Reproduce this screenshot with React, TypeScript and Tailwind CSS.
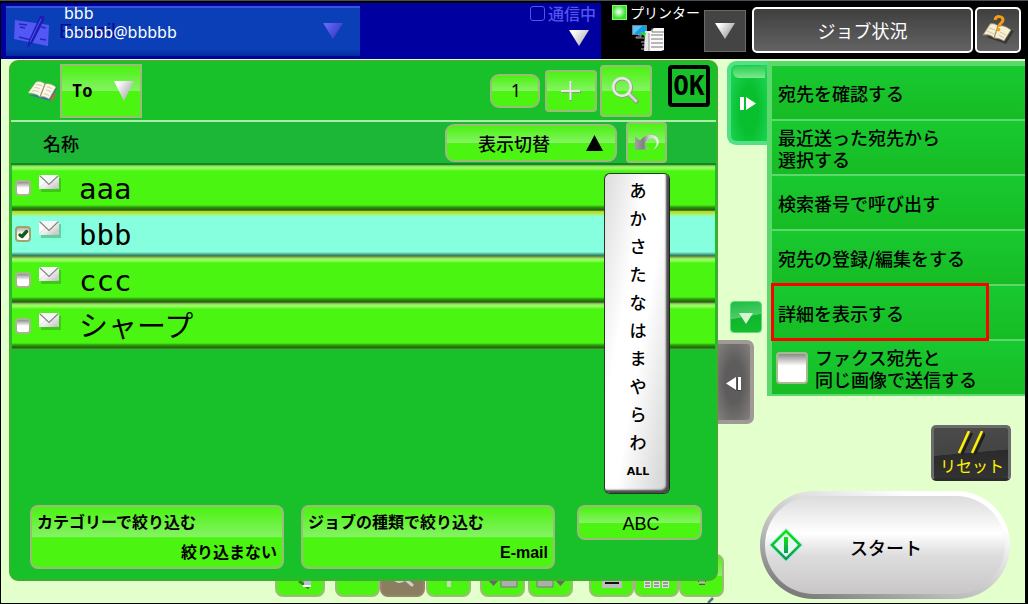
import React, { useState } from "react";
import clsx from "clsx";

const JP = "font-['Noto_Sans_CJK_JP',sans-serif]";

const GLOSS =
  "border-2 border-[#9dbb78] bg-[linear-gradient(180deg,#4bf212_0%,#85f364_50%,#4cf511_51%,#4cf511_100%)] text-black";

const contacts = ["aaa", "bbb", "ccc", "シャープ"];
const kana = ["あ", "か", "さ", "た", "な", "は", "ま", "や", "ら", "わ"];
const actions: string[][] = [
  ["宛先を確認する"],
  ["最近送った宛先から", "選択する"],
  ["検索番号で呼び出す"],
  ["宛先の登録/編集をする"],
  ["詳細を表示する"],
];

function Triangle({ className, from = "#ffffff", to = "#b4b4b4", id }: { className?: string; from?: string; to?: string; id: string }) {
  return (
    <svg viewBox="0 0 20 16" preserveAspectRatio="none" className={className} aria-hidden="true">
      <defs>
        <linearGradient id={id} x1="0" y1="0" x2="1" y2="0.6">
          <stop offset="0.2" stopColor={from} />
          <stop offset="1" stopColor={to} />
        </linearGradient>
      </defs>
      <path d="M0 0h20L10 16z" fill={`url(#${id})`} />
    </svg>
  );
}

function MailPenIcon() {
  return (
    <svg viewBox="0 0 38 34" className="h-[34px] w-[38px]" aria-hidden="true">
      <path d="M2 5l34 5-1 21L1 24z" fill="#5358f5" />
      <path d="M6 9l8 1M7 12l5 1M28 12l5 1M6 22l12 3M27 24l6 1" stroke="#2727b8" strokeWidth="1.3" />
      <path d="M27 1c4-1 5 1 4 4L20 27l-6 6 2-8z" fill="#1b1bb6" />
      <path d="M28 4L17 27" stroke="#4a4fe0" strokeWidth="1.2" />
    </svg>
  );
}

function BookIcon({ className }: { className?: string }) {
  return (
    <svg viewBox="0 0 30 20" className={className} aria-hidden="true">
      <path d="M1 14l21 6 7-13-1-2-6 9z" fill="#39759b" />
      <path d="M22 19l4-7 2 1-4 7z" fill="#c8623c" />
      <path d="M0 12L8 1c4-1 7 0 9 2 3-1 7 0 11 3l-7 12c-3-2-6-3-9-2-3-3-7-4-12-4z" fill="#fbf7e6" stroke="#a9a184" strokeWidth="0.6" />
      <path d="M17 3l-5 13" stroke="#a08f66" strokeWidth="1.2" />
      <path d="M8 4c2-1 4 0 6 1M6 7c2-1 4 0 6 1M4 10c3-1 5 0 7 1M19 6c2 0 4 1 5 2M18 9c2 0 4 1 5 2M16 13c2 0 4 1 5 2" stroke="#c9c1a2" strokeWidth="0.9" fill="none" />
    </svg>
  );
}

function HelpBookIcon() {
  return (
    <svg viewBox="0 0 32 30" className="h-[30px] w-[32px]" aria-hidden="true">
      <path d="M4 22l20 7 8-13-3-1z" fill="#2e2a25" opacity="0.7" />
      <path d="M1 20L8 9c3-1 6 0 8 2 4-1 8 0 13 4l-7 11c-3-2-7-3-10-3-3-3-6-4-11-3z" fill="#f6efd4" stroke="#97876a" strokeWidth="0.8" />
      <path d="M16 11l-4 12" stroke="#a08f66" strokeWidth="1.2" />
      <path d="M7 13l6 2M5 16l7 3M18 17l6 3M17 20l5 3" stroke="#cbbf9b" strokeWidth="0.9" />
      <path d="M13 5c1-5 8-4 8 0 0 3-4 3-4 7" stroke="#f59c12" strokeWidth="3" fill="none" strokeLinecap="butt" />
      <circle cx="16.500" cy="14.600" r="1.800" fill="#f59c12" />
    </svg>
  );
}

function PrinterIcon() {
  return (
    <svg viewBox="0 0 33 27" className="h-[27px] w-[33px]" aria-hidden="true">
      <rect x="0.5" y="0.5" width="14" height="9" fill="#159de4" stroke="#6d7f8c" />
      <path d="M1 1h9L2 9H1z" fill="#5cc3f5" />
      <path d="M6 10h3v2H4v1h8" stroke="#9aa4aa" fill="none" />
      <path d="M9 17h4M10 20h3M9 24h4" stroke="#777" strokeWidth="1.600" />
      <path d="M13 6h5v20h-6z" fill="#e8e8e8" />
      <path d="M17 7l5-4h10v22l-3 1H17z" fill="#fafafa" />
      <path d="M20 3v4h12M19 10h12M19 14h12M19 18h12M19 22h12" stroke="#777" strokeWidth="1" fill="none" />
      <path d="M17 8v18" stroke="#999" />
      <path d="M8 7l6 1-1 4z" fill="#27e021" />
    </svg>
  );
}

function EnvelopeIcon() {
  return (
    <svg viewBox="0 0 24 19" className="mt-[10px] h-[19px] w-[24px] self-start" aria-hidden="true">
      <defs>
        <linearGradient id="env" x1="0" y1="0" x2="1" y2="1">
          <stop offset="0.4" stopColor="#fff" />
          <stop offset="1" stopColor="#b9b9b9" />
        </linearGradient>
      </defs>
      <rect x="2" y="3" width="20" height="14" fill="#1c7a20" opacity="0.35" />
      <rect width="20" height="14" fill="url(#env)" />
      <path d="M0 13l7-6M20 13l-7-6" stroke="#dadada" />
      <path d="M0.5 0.5l9.5 9 9.5-9" stroke="#858585" strokeWidth="1.2" fill="#f6f6f6" />
    </svg>
  );
}

const TickBox = ({ id, checked, onChange, label }: { id: string; checked: boolean; onChange: () => void; label: string }) => (
  <span className="relative flex size-[16px]">
    <input
      id={id}
      type="checkbox"
      aria-label={label}
      checked={checked}
      onChange={onChange}
      className="size-[16px] appearance-none rounded-[4px] border-2 border-[#a5b889] bg-[linear-gradient(180deg,#8f8f8f,#ffffff_50%)] checked:border-[#a2a26c] checked:bg-[linear-gradient(180deg,#b5b5b5,#ffffff_50%)]"
    />
    {checked && (
      <svg viewBox="0 0 16 16" className="pointer-events-none absolute inset-0" aria-hidden="true">
        <path d="M5 9l2 1.500 4.500-5" stroke="#155c12" strokeWidth="3.400" strokeLinecap="round" strokeLinejoin="round" fill="none" />
      </svg>
    )}
  </span>
);

function Header() {
  return (
    <header className="flex h-[59px] shrink-0 border-t border-[#4b4f5c] bg-black pt-[2px] pl-px">
      <div className="flex min-w-0 flex-1 bg-[#0000a0]">
        <button className="relative mt-[3px] ml-[5px] flex h-[50px] w-[59%] items-center border-t-2 border-[#3457d8] bg-[linear-gradient(180deg,#0a3fb8,#0a3fb8_85%,#062c9c)] pr-[17px] pl-[7px] text-left">
          <MailPenIcon />
          <span className="absolute top-[11px] left-[53px] font-['Liberation_Sans',sans-serif] text-[20px] leading-[24px] text-[#0a0a90]" aria-hidden="true">
            E-mail
          </span>
          <span className="relative ml-[13px] flex flex-1 flex-col self-start font-['Noto_Sans',sans-serif] text-[16px] leading-[19px] text-white">
            <span className="-mt-[4px]">bbb</span>
            <span>bbbbb@bbbbb</span>
          </span>
          <Triangle id="tri-mail" from="#6266f5" to="#3436c4" className="-mt-[2px] h-[16px] w-[20px]" />
        </button>
        <div className="ml-auto flex flex-col items-end pr-[5px]">
          <div className="flex items-center gap-[3px] text-[16px] leading-[20px] font-medium text-[#5353f0]">
            <span className="size-[15px] rounded-[3px] border border-[#5353f0]" />
            通信中
          </div>
          <button aria-label="通信メニュー" className="mt-[7px] mr-[7px]">
            <Triangle id="tri-comm" className="h-[16px] w-[20px]" />
          </button>
        </div>
      </div>
      <div className="flex w-[103px] flex-col pl-[11px] text-white">
        <div className="flex items-center gap-[3px] text-[14px] leading-[18px] whitespace-nowrap">
          <span className="size-[15px] shrink-0 border border-[#8af56d] bg-[radial-gradient(circle_at_45%_45%,#ffffff,#35e52c_65%)]" />
          プリンター
        </div>
        <div className="mt-[4px] pl-[20px]">
          <PrinterIcon />
        </div>
      </div>
      <button aria-label="プリンターメニュー" className="mt-[7px] flex size-[42px] items-center justify-center border border-[#6a6a6a] bg-[#444444]">
        <Triangle id="tri-print" className="h-[16px] w-[20px]" to="#999999" />
      </button>
      <button className="mt-[4px] ml-[6px] h-[46px] w-[221px] rounded-[5px] border-2 border-white bg-[linear-gradient(180deg,#3f3f3f,#636363)] text-[18px] leading-[22px] text-white">
        ジョブ状況
      </button>
      <button aria-label="ヘルプ" className="mt-[4px] mr-[7px] ml-[2px] flex size-[46px] items-center justify-center rounded-[5px] border-2 border-white bg-[linear-gradient(180deg,#3f3f3f,#636363)]">
        <HelpBookIcon />
      </button>
    </header>
  );
}

function AddressPanel() {
  const [picked, setPicked] = useState("bbb");
  return (
    <section className="relative z-10 mt-px mb-[22px] ml-[8px] flex min-w-0 flex-1 flex-col rounded-[9px] border-2 border-[#3fae2c] bg-[#18c129]">
      <div className="flex h-[58px] items-center pr-[6px] pl-[17px]">
        <BookIcon className="h-[20px] w-[30px]" />
        <button className={clsx("ml-[2px] flex h-[54px] w-[82px] items-center justify-between pr-[6px] pl-[10px] font-['DejaVu_Sans_Mono',monospace] text-[17px] leading-[20px] font-bold", GLOSS)}>
          To
          <Triangle id="tri-to" className="h-[20px] w-[20px]" to="#a8a8a8" />
        </button>
        <button className={clsx("ml-auto h-[34px] w-[50px] rounded-[9px] pb-[2px] pl-[2px] font-['Noto_Sans',sans-serif] text-[18px] leading-[22px]", GLOSS)}>1</button>
        <button aria-label="追加" className={clsx("ml-[5px] flex h-[42px] w-[52px] items-center justify-center rounded-[4px]", GLOSS)}>
          <svg viewBox="0 0 20 20" className="size-[20px]" aria-hidden="true">
            <path d="M10 1v19M1 11h19" stroke="#8d968a" strokeWidth="2" />
            <path d="M9.500 0v19M0 10h19" stroke="#e4ece0" strokeWidth="2" />
          </svg>
        </button>
        <button aria-label="検索" className={clsx("ml-[3px] flex size-[52px] items-center justify-center rounded-[4px] pb-[3px] pr-[2px]", GLOSS)}>
          <svg viewBox="0 0 28 28" className="size-[28px]" aria-hidden="true">
            <path d="M18.500 18.500l7 7" stroke="#8d8d8d" strokeWidth="4.500" strokeLinecap="round" />
            <circle cx="11.500" cy="11.500" r="8.800" fill="none" stroke="#929c8a" strokeWidth="3.600" />
            <path d="M18 18l7 7" stroke="#d6d6d6" strokeWidth="3" strokeLinecap="round" />
            <circle cx="11" cy="11" r="8.800" fill="none" stroke="#e6e8e2" strokeWidth="2.800" />
          </svg>
        </button>
        <button className="mt-[3px] ml-[16px] size-[42px] self-start rounded-[4px] border-4 border-black text-center font-['DejaVu_Sans_Mono',monospace] text-[26px] leading-[34px] font-bold text-black">
          OK
        </button>
      </div>

      <div className="flex h-[45px] items-center border-t-2 border-b-2 border-t-[#a8eea4] border-b-[#0b8f1c] bg-[#1db737] pr-[49px] pl-[32px] text-[18px] leading-[22px] font-medium text-black">
        <span>名称</span>
        <button className={clsx("ml-auto flex h-[38px] w-[172px] items-center rounded-[9px] pr-[12px] pl-[31px]", GLOSS)}>
          表示切替
          <svg viewBox="0 0 17 16" className="ml-auto h-[16px] w-[17px]" aria-hidden="true">
            <path d="M8.500 0L17 16H0z" />
          </svg>
        </button>
        <button aria-label="戻す" className={clsx("ml-[9px] flex size-[41px] items-center justify-center rounded-[4px]", GLOSS)}>
          <svg viewBox="0 0 24 17" className="h-[17px] w-[24px] shrink-0" aria-hidden="true">
            <defs>
              <linearGradient id="undo" x1="0" y1="0" x2="1" y2="0">
                <stop offset="0" stopColor="#a2a2a2" />
                <stop offset="0.35" stopColor="#808080" />
                <stop offset="0.6" stopColor="#d0d0d0" />
                <stop offset="1" stopColor="#f4f4f4" />
              </linearGradient>
            </defs>
            <path d="M0 2.500V16l14-1-4.500-4C11 6 16 3 19.500 5c3 2 3 6.500-1.500 11 6.500-4 7.500-10.500 2.500-14C15.500-1 9 1.500 5 6.500z" fill="url(#undo)" />
          </svg>
        </button>
      </div>

      <div className="relative flex-1">
        <ul className="mx-px">
          {contacts.map((name, i) => {
            const on = picked === name;
            return (
              <li
                key={name}
                className={clsx(
                  "flex h-[46px] items-center pl-[3px]",
                  on
                    ? "bg-[linear-gradient(180deg,#c9c718_0px,#a3ee38_2px,#a4f58f_4px,#86ffdf_6px,#86ffdf_41px,#4fae8b_43px,#2d7255_45px,#a7a73c_46px)]"
                    : "bg-[linear-gradient(180deg,#7aa45a_0px,#9afc62_2px,#8dfb52_4px,#4af511_6px,#4af511_40px,#2c9d0a_42px,#1e5d0a_45px,#7b9b4f_46px)]"
                )}
              >
                <TickBox id={`contact-${i}`} label={name} checked={on} onChange={() => setPicked(on ? "" : name)} />
                <label htmlFor={`contact-${i}`} className="ml-[8px] flex h-full flex-1 items-center">
                  <EnvelopeIcon />
                  <span className="mt-px ml-[16px] font-['DejaVu_Sans_Mono','Noto_Sans_CJK_JP',monospace] text-[29px] leading-[32px] text-black">{name}</span>
                </label>
              </li>
            );
          })}
        </ul>
        <nav
          aria-label="索引"
          className="absolute top-[8px] right-[46px] flex w-[66px] flex-col rounded-[6px] border border-[#1f3a22] border-r-[#222] bg-[linear-gradient(100deg,#dcdcdc,#ffffff_35%,#ffffff_55%,#cfcfcf)] pt-[2px] pb-[6px] pl-[2px] text-black shadow-[inset_-3px_-3px_2px_#4b4b4b]"
        >
          {kana.map((k) => (
            <button key={k} className="h-[28px] text-[17px] leading-[28px] font-medium">
              {k}
            </button>
          ))}
          <button className="h-[31px] font-['DejaVu_Sans',sans-serif] text-[11px] leading-[30px] font-bold">ALL</button>
        </nav>
      </div>

      <div className="grid grid-cols-[254fr_254fr_130fr] gap-[17px] pr-[14px] pb-[10px] pl-[19px]">
        {[
          ["カテゴリーで絞り込む", "絞り込まない"],
          ["ジョブの種類で絞り込む", "E-mail"],
        ].map(([title, value]) => (
          <button key={title} className={clsx("flex h-[64px] flex-col justify-between rounded-[8px] px-[5px] pt-[2px] pb-[2px] text-[16px] leading-[24px] font-bold", GLOSS)}>
            <span className="text-left whitespace-nowrap">{title}</span>
            <span className="self-end font-['Liberation_Sans','Noto_Sans_CJK_JP',sans-serif]">{value}</span>
          </button>
        ))}
        <button className={clsx("ml-[5px] h-[35px] rounded-[8px] pt-[2px] pl-[3px] font-['Liberation_Sans',sans-serif] text-[18px] leading-[22px]", GLOSS)}>ABC</button>
      </div>
    </section>
  );
}

function BackToolbar() {
  const base = "flex h-[43px] w-[45px] items-end justify-center rounded-[8px] pb-[6px]";
  return (
    <div className="absolute bottom-[6px] left-[274px] flex items-end" aria-hidden="true">
      <div className={clsx(base, "w-[50px]", GLOSS)}>
        <svg viewBox="0 0 28 12" className="h-[12px] w-[28px]">
          <path d="M3 2.500h15" stroke="#1c3f1c" strokeWidth="2.500" />
          <path d="M13 4l10 7" stroke="#2c8a1c" strokeWidth="3" />
          <path d="M18 0h7v10h-9V8h2z" fill="#b9bdd0" />
          <path d="M18 2h7M17 9h8" stroke="#fff" strokeWidth="2" />
        </svg>
      </div>
      <div className={clsx(base, "ml-[10px]", GLOSS)} />
      <div className={clsx(base, "border-2 border-[#9a8468] bg-[#8b7d60]")}>
        <svg viewBox="0 0 24 14" className="mb-px h-[14px] w-[24px]">
          <path d="M2 2c2 6 8 7 12 3M14 5l7 6" stroke="#cfcfcf" strokeWidth="3" fill="none" strokeLinecap="round" />
        </svg>
      </div>
      <div className={clsx(base, "ml-px", GLOSS)}>
        <svg viewBox="0 0 4 15" className="mb-[2px] h-[15px] w-[4px]">
          <path d="M0 0h4v15H0z" fill="#ccd4c7" />
        </svg>
      </div>
      <div className={clsx(base, "ml-[9px]", GLOSS)}>
        <svg viewBox="0 0 30 12" className="h-[12px] w-[30px] shrink-0">
          <path d="M4 0h3v4h3l-4.500 5L1 4h3z" fill="#686868" />
          <path d="M13 1h16v9H13z" fill="#adadad" stroke="#777" />
        </svg>
      </div>
      <div className={clsx(base, "ml-[3px]", GLOSS)}>
        <svg viewBox="0 0 30 12" className="h-[12px] w-[30px] shrink-0">
          <path d="M23 0h3v4h3l-4.500 5L20 4h3z" fill="#686868" />
          <path d="M1 1h16v9H1z" fill="#adadad" stroke="#777" />
        </svg>
      </div>
      <div className={clsx(base, "ml-[16px]", GLOSS)}>
        <svg viewBox="0 0 20 12" className="h-[12px] w-[20px]">
          <path d="M0 0h20v11H0z" fill="#bdbdbd" />
          <path d="M3 2h14M3 6h14" stroke="#111" strokeWidth="2" />
        </svg>
      </div>
      <div className={clsx(base, GLOSS)}>
        <svg viewBox="0 0 26 12" className="h-[12px] w-[26px]">
          <path d="M0 0h7v11H0zM9 0h7v11H9zM18 0h7v11h-7z" fill="#dedede" />
          <path d="M1 3h5M1 6h5M1 9h5M10 3h5M10 6h5M10 9h5M19 3h5M19 6h5M19 9h5" stroke="#555" />
        </svg>
      </div>
      <div className={clsx(base, GLOSS)}>
        <svg viewBox="0 0 18 14" className="mb-[4px] h-[14px] w-[18px]">
          <path d="M0 7h18M5 10h8M6 13h6" stroke="#555" strokeWidth="2" />
          <path d="M6 6h6v7H6z" fill="#ccc" opacity="0.6" />
        </svg>
      </div>
    </div>
  );
}

function SideArea() {
  const [fax, setFax] = useState(false);
  return (
    <aside className="relative flex w-[307px] shrink-0 flex-col pt-[2px]">
      <div className="flex items-start">
        <div className="flex w-[49px] flex-col">
          <button aria-label="たたむ" className="flex h-[84px] w-[40px] flex-col items-center self-end rounded-l-[9px] border-4 border-r-0 border-[#55df86] bg-[radial-gradient(ellipse_at_50%_60%,#08bf2d_35%,#1fdb60)]">
            <span className="mt-px mr-[2px] h-[12px] w-[32px] self-end rounded-l-[7px] bg-[linear-gradient(180deg,#2ecf55,#7be98c)]" />
            <svg viewBox="0 0 16 14" className="mt-[19px] mr-[2px] h-[14px] w-[16px]" aria-hidden="true">
              <path d="M0 0h4v13H0zM6 0l10 6.500L6 13z" fill="#fff" />
            </svg>
          </button>
          <button aria-label="下へ" className="mt-[156px] ml-[12px] flex size-[32px] items-center justify-center rounded-[4px] border border-[#5edb7d] bg-[linear-gradient(170deg,#1dbd42,#4dcc68_48%,#10b52c_50%,#14bf2e)]">
            <svg viewBox="0 0 14 11" className="mt-[3px] h-[11px] w-[14px]" aria-hidden="true">
              <path d="M0 0h14L7 11z" fill="#d5f5d2" />
            </svg>
          </button>
          <button aria-label="開く" className="mt-[7px] flex h-[84px] w-[36px] items-center justify-center rounded-r-[7px] border-4 border-l-0 border-[#a09a97] bg-[radial-gradient(ellipse_at_center,#5e5c5c_40%,#858080)]">
            <svg viewBox="0 0 16 14" className="mt-[3px] h-[14px] w-[16px]" aria-hidden="true">
              <path d="M11 1h4v13h-4zM10 1v13L1 7.500z" fill="#444" />
              <path d="M12 0h3v13h-3zM10 0v13L0 6.500z" fill="#fff" />
            </svg>
          </button>
        </div>

        <ul className="flex-1 border-t-[5px] border-l-[5px] border-[#5bd96c] text-[18px] leading-[22px] font-medium text-black">
          {actions.map((lines, i) => (
            <li key={lines[0]} className="relative h-[55px]">
              <button className="flex size-full flex-col items-start justify-center border-b-2 border-[#5bd96c] bg-[linear-gradient(180deg,#18c930,#17bc24)] pl-[6px] text-left whitespace-nowrap">
                {lines.map((l) => (
                  <span key={l}>{l}</span>
                ))}
              </button>
              {i === 4 && <span className="pointer-events-none absolute -top-[3px] -left-px h-[58px] w-[218px] border-3 border-[#ff0000]" />}
            </li>
          ))}
          <li className="flex h-[55px] items-center border-b-2 border-[#5bd96c] bg-[linear-gradient(180deg,#18c930,#17bc24)] pl-[4px]">
            <input
              id="fax-same"
              type="checkbox"
              checked={fax}
              onChange={() => setFax(!fax)}
              className="size-[32px] appearance-none rounded-[4px] border-2 border-[#a5bd8d] bg-[linear-gradient(180deg,#8b8b8b,#ffffff_42%)] checked:bg-[#2b8a2b]"
            />
            <label htmlFor="fax-same" className="ml-[7px] whitespace-nowrap">
              ファクス宛先と
              <br />
              同じ画像で送信する
            </label>
          </li>
        </ul>
      </div>

      <button className="relative mt-px mr-[14px] flex h-[56px] w-[80px] flex-col items-center self-end rounded-[5px] border-3 border-[#6b6b6b] border-b-[#2c2c2c] bg-[linear-gradient(175deg,#4b4b4b,#444444_49%,#2b2b2b_50%,#333333)] text-[16px] leading-[20px] text-[#fff200]">
        <svg viewBox="0 0 28 24" className="mt-[3px] h-[24px] w-[28px]" aria-hidden="true">
          <path d="M5 23L15 2M18 23L28 2" stroke="#1d1d1d" strokeWidth="2.500" />
          <path d="M2 22L12 0M15 22L25 0" stroke="#fff200" strokeWidth="2.500" />
        </svg>
        <span className="pl-[2px] whitespace-nowrap">リセット</span>
      </button>

      <button className="relative mt-[10px] mr-[15px] h-[108px] w-[250px] self-end rounded-full bg-[linear-gradient(20deg,#666666,#b9b9b9_35%,#cfcfcf_50%,#ffffff_80%)] p-[5px] text-[18px] leading-[22px] text-black">
        <span className="flex size-full items-center rounded-full bg-[linear-gradient(180deg,#dcdcdc,#ffffff_38%,#dedede_60%,#c9c6c6)] pl-[4px]">
          <svg viewBox="0 0 34 34" className="size-[34px]" aria-hidden="true">
            <defs>
              <linearGradient id="go" x1="0" y1="0" x2="0" y2="1">
                <stop offset="0" stopColor="#12e512" />
                <stop offset="1" stopColor="#0b9b58" />
              </linearGradient>
            </defs>
            <path d="M17 3l14 14-14 14L3 17z" fill="none" stroke="#8ee8f5" strokeWidth="5" opacity="0.45" />
            <path d="M17 3l14 14-14 14L3 17z" fill="#e3f7f3" stroke="url(#go)" strokeWidth="2.600" />
            <path d="M15 9h4v16h-4z" fill="url(#go)" />
          </svg>
          <span className="mt-[4px] ml-[47px] font-medium">スタート</span>
        </span>
      </button>
      <svg viewBox="0 0 8 6" className="absolute bottom-0 -left-[11px] h-[6px] w-[8px]" aria-hidden="true">
        <path d="M1 6l5-5" stroke="#57728d" strokeWidth="2.500" />
      </svg>
    </aside>
  );
}

export default function App() {
  return (
    <div className={clsx("flex min-h-screen min-w-[1000px] flex-col bg-black", JP)}>
      <Header />
      <main className="relative mr-[3px] mb-px ml-px flex flex-1 bg-[#e3ffcb]">
        <BackToolbar />
        <AddressPanel />
        <SideArea />
      </main>
    </div>
  );
}
